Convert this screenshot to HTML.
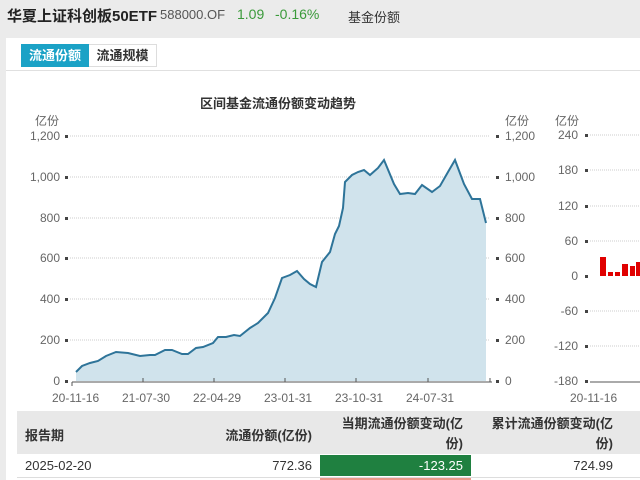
<!DOCTYPE html>
<html><head><meta charset="utf-8"><style>
*{margin:0;padding:0;box-sizing:border-box}
body{width:640px;height:480px;overflow:hidden;background:#ebebeb;font-family:"Liberation Sans","Noto Sans CJK SC",sans-serif;position:relative}
.a{position:absolute;white-space:nowrap}
</style></head><body>
<div class="a" style="left:7px;top:5px;font-size:15px;font-weight:bold;color:#222">华夏上证科创板50ETF</div>
<div class="a" style="left:160px;top:7px;font-size:13px;color:#555">588000.OF</div>
<div class="a" style="left:237px;top:6px;font-size:14px;color:#3a9a3a">1.09</div>
<div class="a" style="left:275px;top:6px;font-size:14px;color:#3a9a3a">-0.16%</div>
<div class="a" style="left:348px;top:7px;font-size:13px;color:#333">基金份额</div>
<div class="a" style="left:6px;top:38px;width:634px;height:442px;background:#fff"></div>
<div class="a" style="left:21px;top:44px;width:68px;height:23px;background:#1ba2c6;color:#fff;font-size:13px;font-weight:bold;text-align:center;line-height:23px">流通份额</div>
<div class="a" style="left:89px;top:44px;width:68px;height:23px;border:1px solid #ddd;border-left:none;color:#333;font-size:13px;font-weight:bold;text-align:center;line-height:21px">流通规模</div>
<div class="a" style="left:6px;top:70px;width:634px;height:1px;background:#e0e0e0"></div>
<div class="a" style="left:200px;top:93px;font-size:13px;font-weight:bold;color:#333">区间基金流通份额变动趋势</div>
<svg class="a" style="left:0;top:0" width="640" height="480">
<g font-family="Liberation Sans,Noto Sans CJK SC,sans-serif" font-size="12" fill="#666">
<text x="35" y="125">亿份</text><text x="505" y="125">亿份</text><text x="555" y="125">亿份</text>
<g stroke="#ccc" stroke-dasharray="1,1">
<line x1="70" y1="136" x2="490" y2="136"/><line x1="70" y1="177" x2="490" y2="177"/><line x1="70" y1="218" x2="490" y2="218"/><line x1="70" y1="258" x2="490" y2="258"/><line x1="70" y1="299" x2="490" y2="299"/><line x1="70" y1="340" x2="490" y2="340"/>
<line x1="590" y1="135" x2="640" y2="135"/><line x1="590" y1="170" x2="640" y2="170"/><line x1="590" y1="206" x2="640" y2="206"/><line x1="590" y1="241" x2="640" y2="241"/><line x1="590" y1="311" x2="640" y2="311"/><line x1="590" y1="346" x2="640" y2="346"/>
</g>
<g text-anchor="end">
<text x="60" y="140">1,200</text><text x="60" y="181">1,000</text><text x="60" y="222">800</text><text x="60" y="262">600</text><text x="60" y="303">400</text><text x="60" y="344">200</text><text x="60" y="385">0</text>
<text x="578" y="139">240</text><text x="578" y="174">180</text><text x="578" y="210">120</text><text x="578" y="245">60</text><text x="578" y="280">0</text><text x="578" y="315">-60</text><text x="578" y="350">-120</text><text x="578" y="385">-180</text>
</g>
<g><text x="505" y="140">1,200</text><text x="505" y="181">1,000</text><text x="505" y="222">800</text><text x="505" y="262">600</text><text x="505" y="303">400</text><text x="505" y="344">200</text><text x="505" y="385">0</text></g>
<g fill="#444">
<rect x="65" y="135" width="3" height="3"/><rect x="65" y="176" width="3" height="3"/><rect x="65" y="217" width="3" height="3"/><rect x="65" y="257" width="3" height="3"/><rect x="65" y="298" width="3" height="3"/><rect x="65" y="339" width="3" height="3"/><rect x="65" y="380" width="3" height="3"/>
<rect x="496" y="135" width="3" height="3"/><rect x="496" y="176" width="3" height="3"/><rect x="496" y="217" width="3" height="3"/><rect x="496" y="257" width="3" height="3"/><rect x="496" y="298" width="3" height="3"/><rect x="496" y="339" width="3" height="3"/><rect x="496" y="380" width="3" height="3"/>
<rect x="585" y="134" width="3" height="3"/><rect x="585" y="169" width="3" height="3"/><rect x="585" y="205" width="3" height="3"/><rect x="585" y="240" width="3" height="3"/><rect x="585" y="275" width="3" height="3"/><rect x="585" y="310" width="3" height="3"/><rect x="585" y="345" width="3" height="3"/><rect x="585" y="380" width="3" height="3"/>
</g>
<path d="M76,372 L82,366 90,363 98,361 106,356 116,352 128,353 140,356 150,355 155,355 165,350 172,350 182,354 188,354 196,348 203,347 213,343 218,337 226,337 234,335 240,336 250,328 258,323 268,313 275,298 282,278 290,275 297,271 304,279 310,284 316,287 322,262 330,252 335,234 339,226 343,208 345,182 352,175 358,172 364,170 370,175 378,168 384,160 394,184 400,194 408,193 415,194 422,185 432,192 440,186 448,172 455,160 464,184 472,199 480,199 486,223 L486,381 L76,381Z" fill="#d0e3ec"/>
<path d="M76,372 L82,366 90,363 98,361 106,356 116,352 128,353 140,356 150,355 155,355 165,350 172,350 182,354 188,354 196,348 203,347 213,343 218,337 226,337 234,335 240,336 250,328 258,323 268,313 275,298 282,278 290,275 297,271 304,279 310,284 316,287 322,262 330,252 335,234 339,226 343,208 345,182 352,175 358,172 364,170 370,175 378,168 384,160 394,184 400,194 408,193 415,194 422,185 432,192 440,186 448,172 455,160 464,184 472,199 480,199 486,223" fill="none" stroke="#2e7499" stroke-width="2"/>
<line x1="72" y1="382" x2="492" y2="382" stroke="#555"/>
<line x1="590" y1="382" x2="640" y2="382" stroke="#555"/>
<g stroke="#555"><line x1="72" y1="382" x2="72" y2="386"/><line x1="143" y1="378" x2="143" y2="382"/><line x1="214" y1="378" x2="214" y2="382"/><line x1="285" y1="378" x2="285" y2="382"/><line x1="356" y1="378" x2="356" y2="382"/><line x1="428" y1="378" x2="428" y2="382"/><line x1="490" y1="378" x2="490" y2="382"/></g>
<g fill="#e00000"><rect x="600" y="257" width="6" height="19"/><rect x="608" y="272" width="5" height="4"/><rect x="615" y="272" width="5" height="4"/><rect x="622" y="264" width="6" height="12"/><rect x="630" y="266" width="5" height="10"/><rect x="636" y="262" width="4" height="14"/></g>
<g font-size="12"><text x="52" y="402">20-11-16</text><text x="122" y="402">21-07-30</text><text x="193" y="402">22-04-29</text><text x="264" y="402">23-01-31</text><text x="335" y="402">23-10-31</text><text x="406" y="402">24-07-31</text><text x="570" y="402">20-11-16</text></g>
</g>
</svg>
<div class="a" style="left:17px;top:411px;width:623px;height:43px;background:#e8e8e8"></div>
<div class="a" style="left:25px;top:425px;font-size:13px;font-weight:bold;color:#333">报告期</div>
<div class="a" style="left:200px;width:112px;top:425px;font-size:13px;font-weight:bold;color:#333;text-align:right">流通份额(亿份)</div>
<div class="a" style="left:320px;width:143px;top:414px;font-size:13px;font-weight:bold;color:#333;text-align:right;line-height:20px;white-space:normal">当期流通份额变动(亿<br>份)</div>
<div class="a" style="left:470px;width:143px;top:414px;font-size:13px;font-weight:bold;color:#333;text-align:right;line-height:20px;white-space:normal">累计流通份额变动(亿<br>份)</div>
<div class="a" style="left:25px;top:458px;font-size:13px;color:#333">2025-02-20</div>
<div class="a" style="left:200px;width:112px;top:458px;font-size:13px;color:#333;text-align:right">772.36</div>
<div class="a" style="left:320px;top:455px;width:151px;height:21px;background:#1f8040"></div>
<div class="a" style="left:320px;width:143px;top:458px;font-size:13px;color:#fff;text-align:right">-123.25</div>
<div class="a" style="left:470px;width:143px;top:458px;font-size:13px;color:#333;text-align:right">724.99</div>
<div class="a" style="left:17px;top:477px;width:623px;height:1px;background:#ddd"></div>
<div class="a" style="left:320px;top:478px;width:151px;height:2px;background:#e89a8a"></div>
</body></html>
